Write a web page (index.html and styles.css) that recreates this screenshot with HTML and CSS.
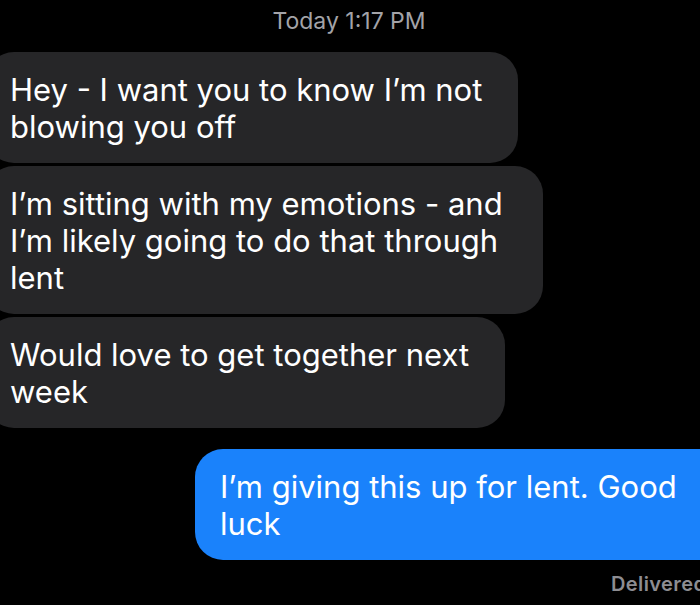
FILE: index.html
```html
<!DOCTYPE html>
<html>
<head>
<meta charset="utf-8">
<link rel="stylesheet" href="styles.css">
</head>
<body>
<div class="thread">
  <div class="stamp">Today 1:17 PM</div>
  <div class="bubble in b1">Hey - I want you to know I’m not blowing you off</div>
  <div class="bubble in b2">I’m sitting with my emotions - and I’m likely going to do that through lent</div>
  <div class="bubble in b3">Would love to get together next week</div>
  <div class="bubble out b4">I’m giving this up for lent. Good luck</div>
  <div class="status">Delivered</div>
</div>
</body>
</html>
```

FILE: styles.css
```css
html, body {
  margin: 0;
  padding: 0;
  background: #000;
  overflow: hidden;
}
body {
  width: 700px;
  height: 605px;
  font-family: Inter, Roboto, sans-serif;
  -webkit-font-smoothing: antialiased;
}
.thread {
  display: flex;
  flex-direction: column;
  align-items: flex-start;
  margin: 0 -40px 0 -14px;
}
.stamp {
  align-self: center;
  margin: 7px 0 0 0;
  font-size: 23px;
  line-height: 28px;
  color: #a3a3a8;
  position: relative;
  left: -14px;
}
.bubble {
  box-sizing: border-box;
  border-radius: 28px;
  font-size: 31px;
  line-height: 37px;
  color: #fff;
  padding: 19px 10px 18px 24px;
}
.in {
  background: #262628;
  margin-top: 3px;
}
.b1 { width: 532px; margin-top: 17px; }
.b2 { width: 557px; }
.b3 { width: 519px; }
.out {
  background: #1a82fb;
  align-self: flex-end;
  width: 545px;
  margin-top: 21px;
  padding-left: 25px;
}
.status {
  align-self: flex-end;
  width: 129px;
  margin-top: 12px;
  font-size: 20px;
  font-weight: 600;
  letter-spacing: 0.4px;
  line-height: 24px;
  color: #8d8d92;
}
```
